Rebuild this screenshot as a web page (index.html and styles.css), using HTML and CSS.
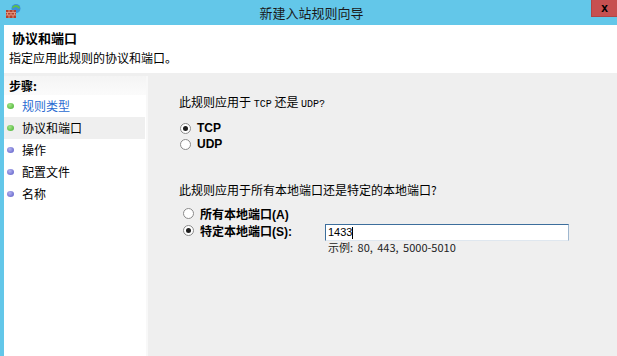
FILE: index.html
```html
<!DOCTYPE html>
<html lang="zh-CN">
<head>
  <meta charset="UTF-8">
  <title>新建入站规则向导</title>
  <link rel="stylesheet" href="styles.css">
</head>
<body>
  <div class="titlebar">
    <svg class="app-icon" width="16" height="16" viewBox="0 0 16 16">
      <circle cx="11" cy="5.5" r="4.5" fill="#3b8fd9"/>
      <path d="M7 4 Q10.5 0 15 4 L14 6 Q11 2.5 8 5.5 Z" fill="#5cc04a"/>
      <rect x="1" y="7" width="10" height="8" fill="#b3412e"/>
      <path d="M1 9.5 H11 M1 12 H11 M4 7 V9.5 M8 7 V9.5 M2.5 9.5 V12 M6 9.5 V12 M9.5 9.5 V12 M4 12 V15 M8 12 V15" stroke="#e9a58f" stroke-width="0.8" fill="none"/>
    </svg>
    <div class="title">新建入站规则向导</div>
    <button class="close">x</button>
  </div>
  <div class="frame">
    <div class="header">
      <div class="page-title">协议和端口</div>
      <div class="page-desc">指定应用此规则的协议和端口。</div>
    </div>
    <div class="main">
      <div class="steps">
        <div class="steps-head">步骤:</div>
        <div class="step done link"><span class="dot green"></span>规则类型</div>
        <div class="step current"><span class="dot green"></span>协议和端口</div>
        <div class="step"><span class="dot purple"></span>操作</div>
        <div class="step"><span class="dot purple"></span>配置文件</div>
        <div class="step"><span class="dot purple"></span>名称</div>
      </div>
      <div class="content">
        <div class="question q1">此规则应用于 <span class="mono">TCP</span> 还是 <span class="mono">UDP?</span></div>
        <div class="option"><span class="radio on"></span><span class="opt-label">TCP</span></div>
        <div class="option"><span class="radio"></span><span class="opt-label">UDP</span></div>

        <div class="question q2">此规则应用于所有本地端口还是特定的本地端口?</div>
        <div class="option ports"><span class="radio"></span><span class="opt-label">所有本地端口(A)</span></div>
        <div class="option ports specific">
          <div class="specific-label"><span class="radio on"></span><span class="opt-label">特定本地端口(S):</span></div>
          <div class="port-field">
            <div class="port-input">1433<span class="caret"></span></div>
            <div class="example">示例: 80, 443, 5000-5010</div>
          </div>
        </div>
      </div>
    </div>
  </div>
</body>
</html>
```

FILE: styles.css
```css
html, body {
  margin: 0;
  height: 100%;
}
body {
  display: flex;
  flex-direction: column;
  font-family: "Noto Sans CJK SC", "Liberation Sans", sans-serif;
  font-size: 12px;
  color: #000;
  background: #efefef;
  overflow: hidden;
}
.titlebar {
  height: 25px;
  flex: none;
  background: #63c7e9;
  display: grid;
  grid-template-columns: 1fr auto 1fr;
  align-items: start;
}
.app-icon {
  display: block;
  margin: 3px 0 0 5px;
}
.title {
  font-size: 13px;
  line-height: 25px;
  color: #1a1a1a;
  padding-left: 6px;
}
.close {
  justify-self: end;
  width: 26px;
  height: 17px;
  padding: 0;
  border: none;
  border-left: 1px solid #b04545;
  border-bottom: 1px solid #b04545;
  background: #c75050;
  color: #000;
  font-family: "Liberation Sans", sans-serif;
  font-weight: bold;
  font-size: 12px;
  line-height: 14px;
}
.frame {
  flex: 1;
  display: flex;
  flex-direction: column;
  border-left: 4px solid #63c7e9;
}
.header {
  height: 48px;
  background: #fff;
  flex: none;
}
.page-title {
  font-weight: bold;
  font-size: 13px;
  line-height: 18px;
  padding: 4px 0 0 8px;
}
.page-desc {
  line-height: 16px;
  padding: 3px 0 0 5px;
}
.main {
  flex: 1;
  display: flex;
  margin-top: 3px;
}
.steps {
  width: 142px;
  background: #fff;
  border-right: 2px solid #f8f8f8;
}
.steps-head {
  height: 19px;
  line-height: 20px;
  padding-left: 5px;
  font-weight: bold;
  background: linear-gradient(#f4f4f4, #fbfbfb);
}
.step {
  height: 22px;
  line-height: 22px;
  display: flex;
  align-items: center;
  margin-right: 1px;
}
.step.current {
  background: #efefef;
}
.step.link {
  color: #2a6bd1;
}
.dot {
  width: 7px;
  height: 6px;
  border-radius: 50%;
  margin: 0 8px 0 3px;
}
.dot.green {
  background: radial-gradient(circle at 40% 35%, #a6e58a, #3fae2a);
}
.dot.purple {
  background: radial-gradient(circle at 40% 35%, #b3b3f0, #5656c4);
}
.content {
  flex: 1;
  padding-left: 31px;
}
.question {
  line-height: 16px;
}
.q1 {
  margin-top: 18px;
  margin-bottom: 7px;
}
.q2 {
  margin-top: 30px;
  margin-bottom: 7px;
}
.mono {
  font-family: "Liberation Mono", monospace;
  font-size: 10px;
}
.option {
  display: flex;
  align-items: center;
  height: 16px;
  padding-left: 1px;
}
.radio {
  width: 9px;
  height: 9px;
  border: 1px solid #8a8a8a;
  border-radius: 50%;
  background: #fff;
  position: relative;
  flex: none;
}
.radio.on::after {
  content: "";
  position: absolute;
  left: 2px;
  top: 2px;
  width: 5px;
  height: 5px;
  border-radius: 50%;
  background: #1e1e1e;
}
.opt-label {
  margin-left: 6px;
  font-weight: bold;
  font-family: "Liberation Sans", "Noto Sans CJK SC", sans-serif;
}
.ports {
  padding-left: 4px;
  height: 17px;
}
.specific {
  height: auto;
  align-items: flex-start;
  margin-top: 2px;
  padding-left: 0;
}
.specific-label {
  width: 142px;
  padding-left: 4px;
  display: flex;
  align-items: center;
  height: 13px;
}
.port-field {
  display: flex;
  flex-direction: column;
}
.port-input {
  width: 240px;
  height: 15px;
  border: 1px solid #3c6e9c;
  border-right-color: #9fb7cf;
  border-bottom-color: #dfe7ef;
  background: #fff;
  font-family: "Liberation Sans", sans-serif;
  font-size: 11px;
  line-height: 15px;
  padding-left: 2px;
  display: flex;
  align-items: center;
}
.caret {
  width: 1px;
  height: 12px;
  background: #000;
}
.example {
  margin-left: 3px;
  line-height: 13px;
  font-size: 11px;
  word-spacing: 2px;
  color: #222;
}
```
